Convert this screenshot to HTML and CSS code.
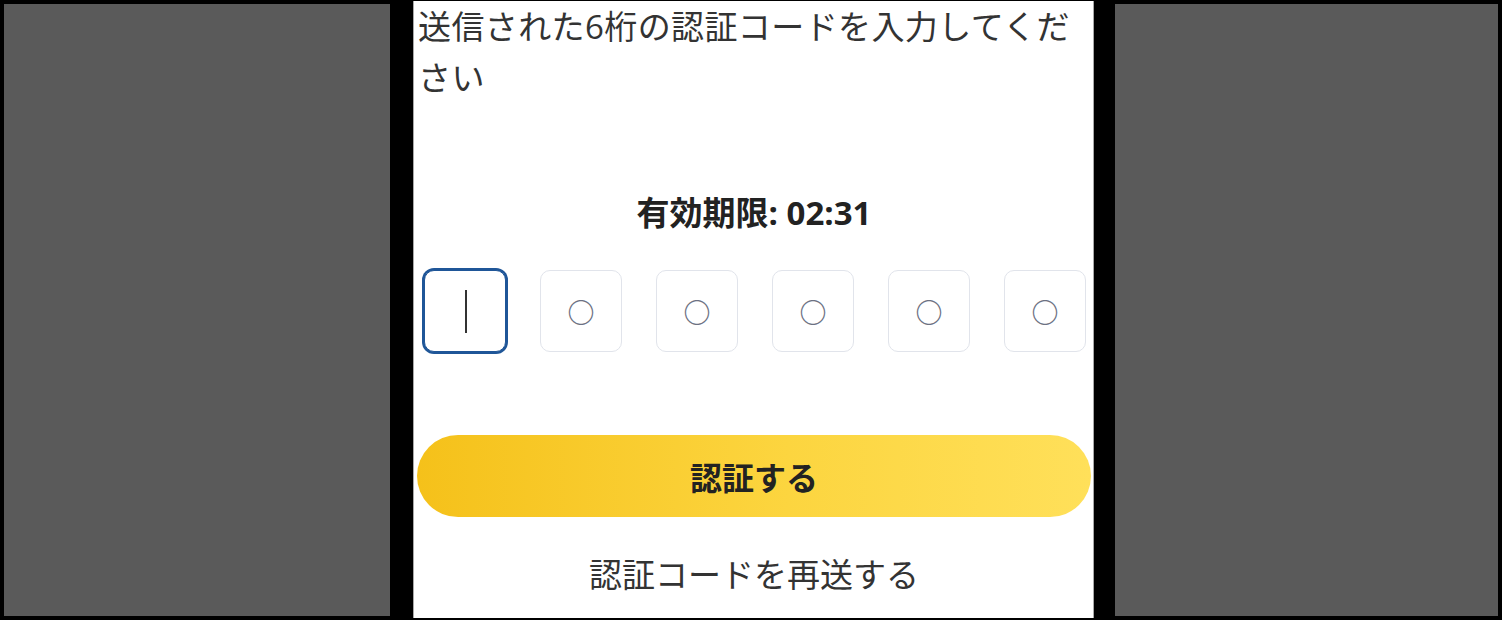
FILE: index.html
```html
<!DOCTYPE html>
<html lang="ja">
<head>
<meta charset="utf-8">
<title>認証コード入力</title>
<link rel="stylesheet" href="styles.css">
</head>
<body>
<div class="stage">
  <div class="side side-left"></div>
  <main class="phone">
    <p class="intro">送信された6桁の認証コードを入力してください</p>
    <h2 class="timer">有効期限: 02:31</h2>
    <div class="otp">
      <div class="cell">
        <input class="digit focused" type="text" maxlength="1" inputmode="numeric" aria-label="1桁目">
        <span class="caret"></span>
      </div>
      <div class="cell"><input class="digit" type="text" maxlength="1" placeholder="○" aria-label="2桁目"></div>
      <div class="cell"><input class="digit" type="text" maxlength="1" placeholder="○" aria-label="3桁目"></div>
      <div class="cell"><input class="digit" type="text" maxlength="1" placeholder="○" aria-label="4桁目"></div>
      <div class="cell"><input class="digit" type="text" maxlength="1" placeholder="○" aria-label="5桁目"></div>
      <div class="cell"><input class="digit" type="text" maxlength="1" placeholder="○" aria-label="6桁目"></div>
    </div>
    <button class="verify" type="button">認証する</button>
    <button class="resend" type="button">認証コードを再送する</button>
  </main>
  <div class="side side-right"></div>
</div>
</body>
</html>
```
FILE: styles.css
```css
html, body {
  margin: 0;
  padding: 0;
  background: #000;
  height: 620px;
  overflow: hidden;
}

body {
  font-family: "Open Sans", "Noto Sans CJK JP", sans-serif;
  color: #333;
}

.stage {
  display: flex;
  height: 620px;
  box-sizing: border-box;
  padding: 1px 4px 2px 4px;
}

.side {
  background: #5a5a5a;
  margin: 3px 0 2px 0;
}

.side-left {
  width: 386px;
}

.side-right {
  width: 383px;
}

.phone {
  width: 681px;
  box-sizing: border-box;
  margin: 0 21px 0 23px;
  background: #fff;
  border-left: 1px solid #a8a8a8;
  border-right: 1px solid #a8a8a8;
  padding: 0 2px 0 3px;
  display: flex;
  flex-direction: column;
}

.intro {
  margin: 0;
  padding-left: 1px;
  font-size: 33px;
  line-height: 51px;
  letter-spacing: 0.4px;
  color: #333;
}

.timer {
  margin: 87px 0 0 0;
  text-align: center;
  font-size: 33px;
  line-height: 45px;
  font-weight: 700;
  color: #222;
}

.otp {
  margin-top: 35px;
  display: flex;
  justify-content: center;
  gap: 34px;
  padding-left: 2px;
}

.cell {
  position: relative;
  width: 82px;
  height: 82px;
}

.digit {
  width: 82px;
  height: 82px;
  box-sizing: border-box;
  margin: 0;
  padding: 0;
  border: 1.5px solid #e1e4eb;
  border-radius: 10px;
  background: #fff;
  text-align: center;
  font-family: "Noto Sans CJK JP", sans-serif;
  font-size: 27px;
  font-weight: 700;
  color: #333;
  outline: none;
}

.digit::placeholder {
  color: #6c7182;
  opacity: 1;
}

.digit.focused {
  border: 1px solid #1f5698;
  box-shadow: 0 0 0 2px #1f5698;
}

.caret {
  position: absolute;
  left: 41px;
  top: 20px;
  width: 2px;
  height: 43px;
  background: #333;
}

.verify {
  margin-top: 83px;
  height: 82px;
  width: 100%;
  border: none;
  border-radius: 41px;
  background: linear-gradient(90deg, #f5c11a 0%, #fcd53f 55%, #ffe05a 100%);
  font-family: "Open Sans", "Noto Sans CJK JP", sans-serif;
  font-size: 32px;
  font-weight: 700;
  color: #222;
  cursor: pointer;
}

.resend {
  margin-top: 32px;
  align-self: center;
  border: none;
  background: transparent;
  padding: 0;
  font-family: "Open Sans", "Noto Sans CJK JP", sans-serif;
  font-size: 33px;
  line-height: 51px;
  color: #333;
  cursor: pointer;
}
```
